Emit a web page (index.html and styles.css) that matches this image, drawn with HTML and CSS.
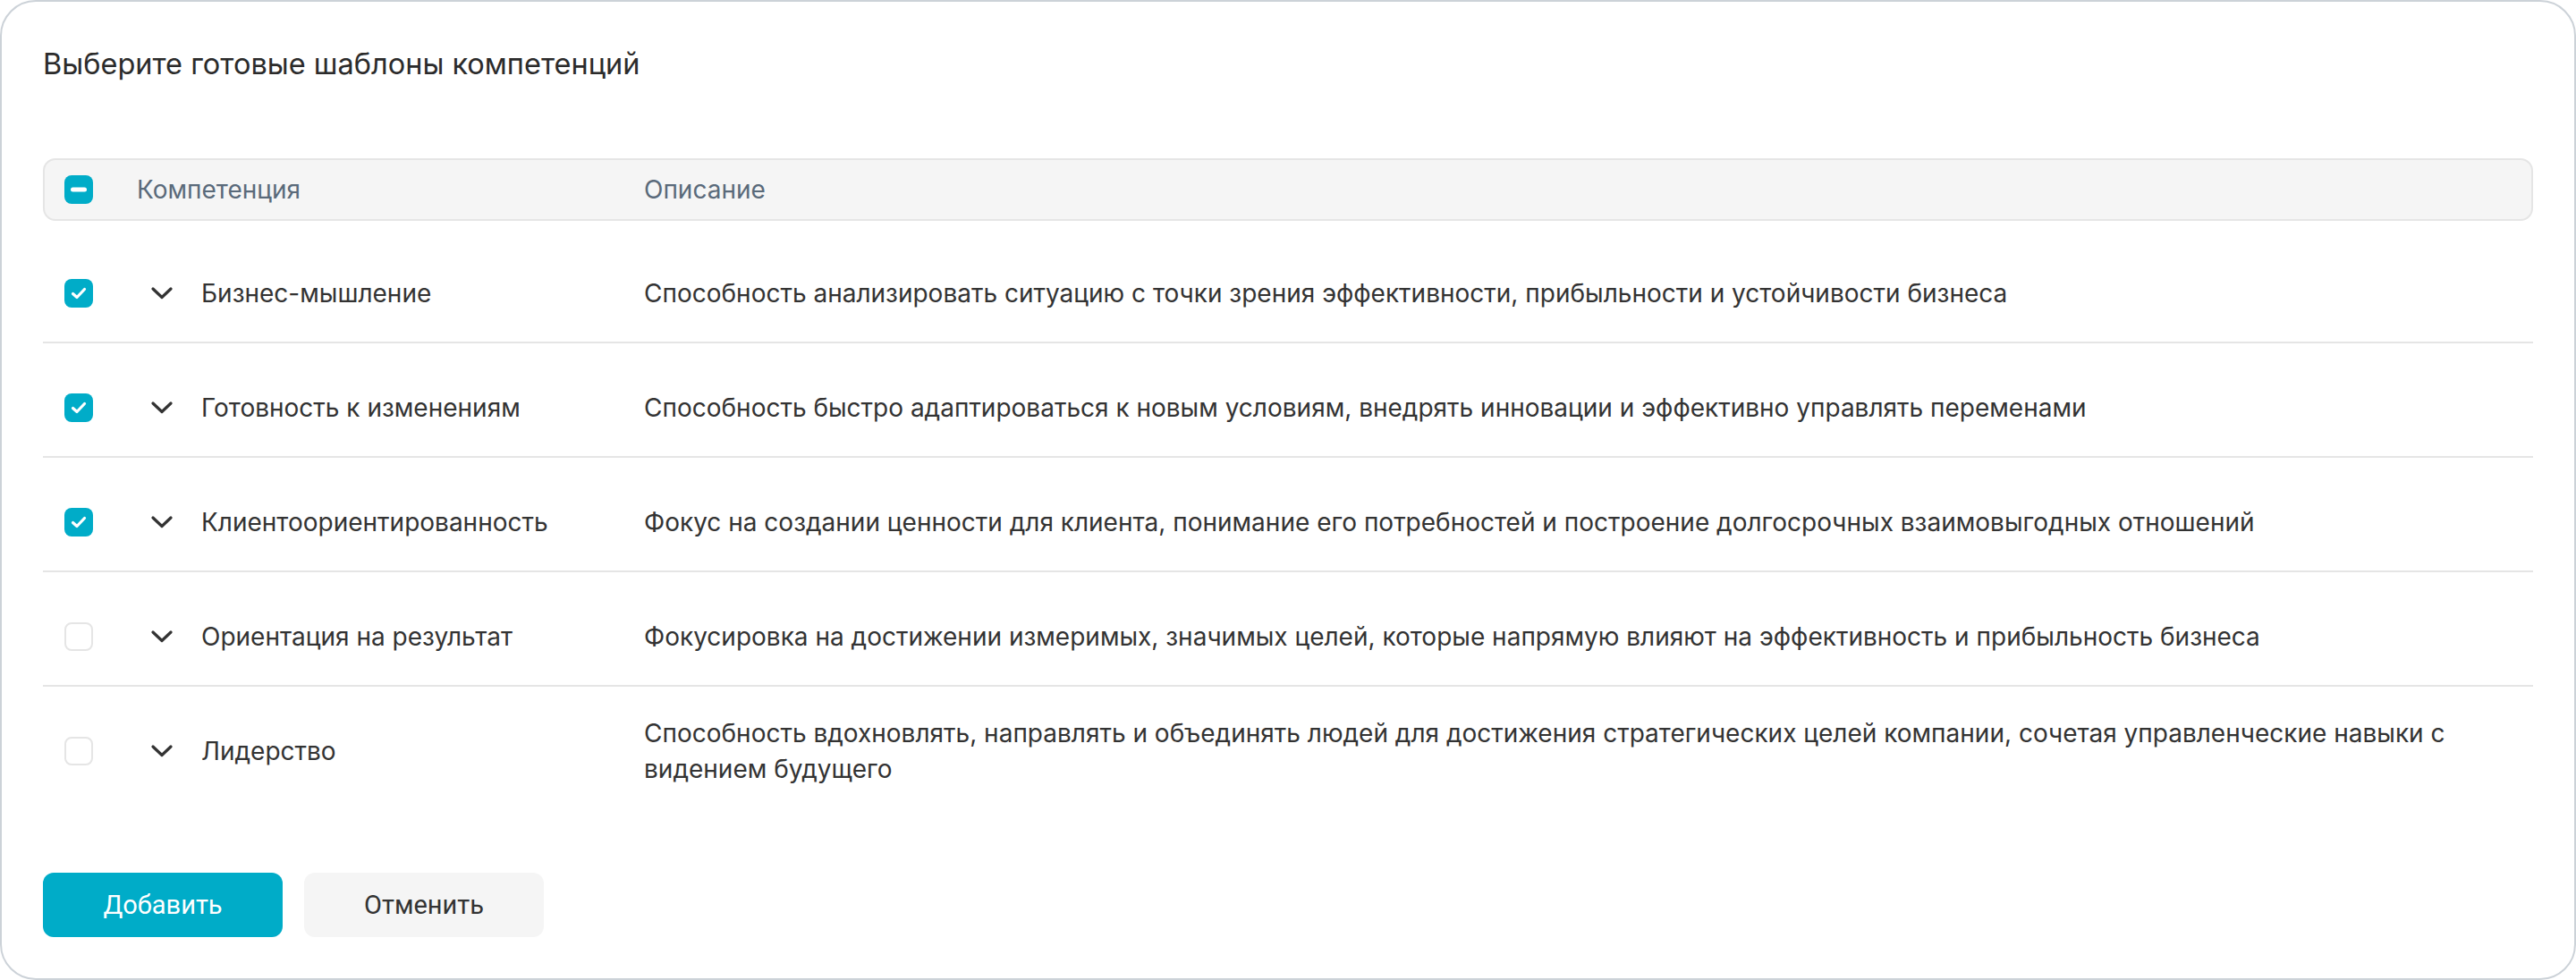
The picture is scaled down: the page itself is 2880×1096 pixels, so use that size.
FILE: index.html
```html
<!doctype html>
<html lang="ru">

<head>
	<meta charset="utf-8">
	<title>Шаблоны компетенций</title>
	<link rel="stylesheet" href="styles.css">
</head>

<body>
	<div class="card">
		<h1 class="title">Выберите готовые шаблоны компетенций</h1>

		<div class="table">
			<div class="head">
				<div class="cell-check">
					<span class="box box-on">
						<svg width="32" height="32" viewBox="0 0 32 32"><rect x="7" y="13.5" width="18" height="5" rx="2.5" fill="#fff"/></svg>
					</span>
				</div>
				<div>Компетенция</div>
				<div>Описание</div>
			</div>

			<div class="row">
				<div class="cell-check">
					<span class="box box-on">
						<svg width="32" height="32" viewBox="0 0 32 32"><path d="M9.5 16.5 L14 20.5 L22.5 11.5" fill="none" stroke="#fff" stroke-width="3.2" stroke-linecap="round" stroke-linejoin="round"/></svg>
					</span>
				</div>
				<div class="name">
					<svg class="chev" width="24" height="14" viewBox="0 0 24 14"><path d="M2 2 L12 11.5 L22 2" fill="none" stroke="#333" stroke-width="3.2" stroke-linecap="round" stroke-linejoin="round"/></svg>
					Бизнес-мышление
				</div>
				<div class="desc">Способность анализировать ситуацию с точки зрения эффективности, прибыльности и устойчивости бизнеса</div>
			</div>

			<div class="row">
				<div class="cell-check">
					<span class="box box-on">
						<svg width="32" height="32" viewBox="0 0 32 32"><path d="M9.5 16.5 L14 20.5 L22.5 11.5" fill="none" stroke="#fff" stroke-width="3.2" stroke-linecap="round" stroke-linejoin="round"/></svg>
					</span>
				</div>
				<div class="name">
					<svg class="chev" width="24" height="14" viewBox="0 0 24 14"><path d="M2 2 L12 11.5 L22 2" fill="none" stroke="#333" stroke-width="3.2" stroke-linecap="round" stroke-linejoin="round"/></svg>
					Готовность к изменениям
				</div>
				<div class="desc">Способность быстро адаптироваться к новым условиям, внедрять инновации и эффективно управлять переменами</div>
			</div>

			<div class="row">
				<div class="cell-check">
					<span class="box box-on">
						<svg width="32" height="32" viewBox="0 0 32 32"><path d="M9.5 16.5 L14 20.5 L22.5 11.5" fill="none" stroke="#fff" stroke-width="3.2" stroke-linecap="round" stroke-linejoin="round"/></svg>
					</span>
				</div>
				<div class="name">
					<svg class="chev" width="24" height="14" viewBox="0 0 24 14"><path d="M2 2 L12 11.5 L22 2" fill="none" stroke="#333" stroke-width="3.2" stroke-linecap="round" stroke-linejoin="round"/></svg>
					Клиентоориентированность
				</div>
				<div class="desc">Фокус на создании ценности для клиента, понимание его потребностей и построение долгосрочных взаимовыгодных отношений</div>
			</div>

			<div class="row">
				<div class="cell-check">
					<span class="box"></span>
				</div>
				<div class="name">
					<svg class="chev" width="24" height="14" viewBox="0 0 24 14"><path d="M2 2 L12 11.5 L22 2" fill="none" stroke="#333" stroke-width="3.2" stroke-linecap="round" stroke-linejoin="round"/></svg>
					Ориентация на результат
				</div>
				<div class="desc">Фокусировка на достижении измеримых, значимых целей, которые напрямую влияют на эффективность и прибыльность бизнеса</div>
			</div>

			<div class="row">
				<div class="cell-check">
					<span class="box"></span>
				</div>
				<div class="name">
					<svg class="chev" width="24" height="14" viewBox="0 0 24 14"><path d="M2 2 L12 11.5 L22 2" fill="none" stroke="#333" stroke-width="3.2" stroke-linecap="round" stroke-linejoin="round"/></svg>
					Лидерство
				</div>
				<div class="desc">Способность вдохновлять, направлять и объединять людей для достижения стратегических целей компании, сочетая управленческие навыки с видением будущего</div>
			</div>
		</div>

		<div class="actions">
			<button class="btn btn-main">Добавить</button>
			<button class="btn btn-cancel">Отменить</button>
		</div>
	</div>
</body>
</html>
```

FILE: styles.css
```css
:root {
	--teal: #00acc8;
	--line: #e5e5e5;
	--text: #333333;
}

* {
	box-sizing: border-box;
}

body {
	margin: 0;
	background: #ffffff;
	font-family: Inter, "Noto Sans", sans-serif;
	color: var(--text);
}

.card {
	width: 2880px;
	height: 1096px;
	border: 2px solid #ccd2d8;
	border-radius: 40px;
	padding: 46px;
	background: #ffffff;
}

.title {
	margin: 0 0 81px;
	font-size: 32.5px;
	font-weight: 400;
	line-height: 48px;
	color: #2b2b2b;
}

.head {
	display: grid;
	grid-template-columns: 103px 567px 1fr;
	align-items: center;
	height: 70px;
	border: 2px solid var(--line);
	border-radius: 14px;
	background: #f5f5f5;
	font-size: 28px;
	line-height: 40px;
	color: #5a6a7a;
	margin-bottom: 9px;
}

.head .cell-check {
	padding-left: 22px;
}

.row {
	display: grid;
	grid-template-columns: 105px 567px 1fr;
	align-items: center;
	padding: 32px 0 14px;
	border-bottom: 2px solid var(--line);
	font-size: 28px;
	line-height: 40px;
}

.row > div {
	min-height: 80px;
	display: flex;
	align-items: center;
}

.row:last-child {
	border-bottom: none;
}

.row .cell-check {
	padding-left: 24px;
}

.box {
	display: block;
	width: 32px;
	height: 32px;
	border: 2px solid var(--line);
	border-radius: 8px;
	background: #ffffff;
}

.box svg {
	display: block;
}

.box-on {
	border: none;
	background: var(--teal);
}

.name {
	gap: 32px;
	padding-left: 16px;
}

.chev {
	flex: none;
}

.desc {
	max-width: 2080px;
}

.actions {
	display: flex;
	gap: 24px;
	margin-top: 82px;
}

.btn {
	width: 268px;
	height: 72px;
	border: none;
	border-radius: 12px;
	font-family: Roboto, "Noto Sans", sans-serif;
	font-size: 29px;
}

.btn-main {
	background: var(--teal);
	color: #ffffff;
}

.btn-cancel {
	background: #f5f5f5;
	color: var(--text);
}
```
